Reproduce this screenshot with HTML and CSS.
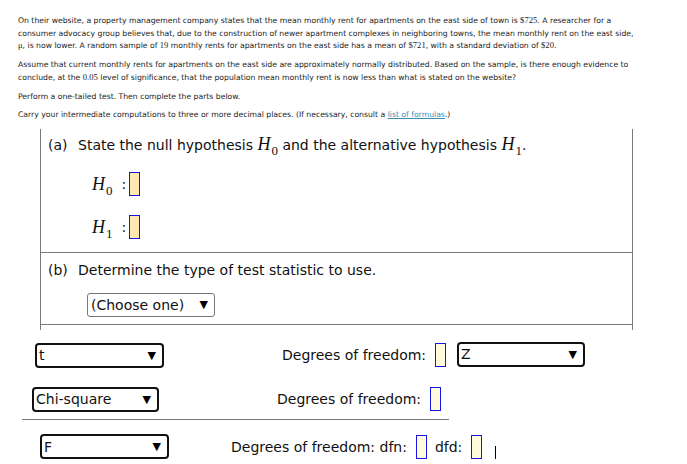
FILE: index.html
```html
<!DOCTYPE html>
<html>
<head>
<meta charset="utf-8">
<link rel="stylesheet" href="styles.css">
</head>
<body>
<div class="intro">
  <p>On their website, a property management company states that the mean monthly rent for apartments on the east side of town is <span class="m">$725</span>. A researcher for a consumer advocacy group believes that, due to the construction of newer apartment complexes in neighboring towns, the mean monthly rent on the east side, <span class="m">μ</span>, is now lower. A random sample of <span class="m">19</span> monthly rents for apartments on the east side has a mean of <span class="m">$721</span>, with a standard deviation of <span class="m">$20</span>.</p>
  <p>Assume that current monthly rents for apartments on the east side are approximately normally distributed. Based on the sample, is there enough evidence to conclude, at the <span class="m">0.05</span> level of significance, that the population mean monthly rent is now less than what is stated on the website?</p>
  <p>Perform a one-tailed test. Then complete the parts below.</p>
  <p>Carry your intermediate computations to three or more decimal places. (If necessary, consult a <a class="link">list of formulas</a>.)</p>
</div>
<div class="panel">
  <div class="sec sec-a">
    <div class="q"><span class="lbl">(a)</span>State the null hypothesis <span class="mh">H<sub>0</sub></span> and the alternative hypothesis <span class="mh">H<sub>1</sub></span>.</div>
    <div class="hyp"><span class="mh">H<sub>0</sub></span><span class="colon">:</span><span class="box hbox"></span></div>
    <div class="hyp"><span class="mh">H<sub>1</sub></span><span class="colon">:</span><span class="box hbox"></span></div>
  </div>
  <div class="sec sec-b">
    <div class="q"><span class="lbl">(b)</span>Determine the type of test statistic to use.</div>
    <div class="choose"><span>(Choose one)</span><span class="arr">▼</span></div>
  </div>
  <div class="tail"></div>
</div>
<div class="row row1">
  <div class="dd dd-t"><span>t</span><span class="arr">▼</span></div>
  <span class="dof dof1">Degrees of freedom:</span><span class="box dbox"></span>
  <div class="dd dd-z"><span>Z</span><span class="arr">▼</span></div>
</div>
<div class="row row2">
  <div class="dd dd-c"><span>Chi-square</span><span class="arr">▼</span></div>
  <span class="dof dof2">Degrees of freedom:</span><span class="box dbox"></span>
</div>
<div class="rule"></div>
<div class="row row3">
  <div class="dd dd-f"><span>F</span><span class="arr">▼</span></div>
  <span class="dof dof3">Degrees of freedom: dfn:</span><span class="box dbox"></span><span class="dof dfd">dfd:</span><span class="box dbox"></span><span class="caret"></span>
</div>
</body>
</html>
```
FILE: styles.css
```css
html, body { margin: 0; padding: 0; background: #fff; }
body { font-family: "DejaVu Sans", Verdana, sans-serif; color: #111; width: 687px; height: 464px; overflow: hidden; }
.intro { padding: 15px 0 0 18px; width: 618px; font-size: 7.7px; color: #222; }
.intro p { margin: 0 0 6px 0; line-height: 12.7px; }
.m { font-family: "Liberation Serif", "DejaVu Serif", serif; font-size: 8.6px; line-height: 1; }
.link { color: #3a8fb7; text-decoration: underline; }
.panel { margin-left: 40px; width: 591px; border-left: 1px solid #7a7a7a; border-right: 1px solid #7a7a7a; margin-top: 7px; }
.sec { border-bottom: 1px solid #7a7a7a; box-sizing: border-box; }
.sec-a { height: 124px; padding-top: 5px; }
.sec-b { height: 72px; padding-top: 6px; }
.tail { height: 5px; }
.q { font-size: 14px; line-height: 22px; padding-left: 7px; }
.lbl { display: inline-block; width: 30px; }
.mh { font-family: "Liberation Serif", "DejaVu Serif", serif; font-style: italic; font-size: 18px; line-height: 1; }
.mh sub { font-style: normal; font-size: 13px; vertical-align: -5px; line-height: 0; margin-left: 1px; }
.hyp { display: flex; align-items: center; margin-left: 51px; height: 24px; margin-top: 16px; }
.hyp + .hyp { margin-top: 19px; }
.colon { font-size: 14px; margin-left: 9px; margin-right: 3px; }
.box { display: inline-block; width: 9px; height: 22px; border: 1px solid #1515e6; box-sizing: content-box; }
.hbox { background: #ffe9b0; }
.dbox { background: #fffbdc; }
.choose { margin-left: 46px; margin-top: 12px; width: 128px; height: 24px; box-sizing: border-box; border: 1px solid #777; border-radius: 3px; display: flex; align-items: center; justify-content: space-between; padding: 0 6px 0 3px; font-size: 14px; }
.arr { font-size: 11px; color: #000; }
.row { display: flex; align-items: center; font-size: 14px; }
.dd { height: 25px; box-sizing: border-box; border: 2px solid #111; border-radius: 4px; display: flex; align-items: center; justify-content: space-between; padding: 0 6px 0 2px; font-size: 14px; }
.row1 { margin-top: 12px; height: 27px; }
.dd-t { margin-left: 35px; width: 129px; }
.dof1 { margin-left: 118px; }
.dof { margin-right: 9px; }
.dd-z { margin-left: 11px; width: 128px; align-self: flex-start; }
.row2 { margin-top: 18px; height: 25px; }
.dd-c { margin-left: 32px; width: 127px; }
.dof2 { margin-left: 118px; }
.rule { margin: 7px 0 0 22px; width: 427px; border-top: 1px solid #7a7a7a; }
.row3 { margin-top: 14px; height: 26px; }
.dd-f { margin-left: 40px; width: 129px; }
.dof3 { margin-left: 62px; }
.dfd { margin-left: 8px; }
.caret { display: inline-block; width: 1px; height: 13px; background: #000; margin-left: 13px; margin-top: 12px; }
```
